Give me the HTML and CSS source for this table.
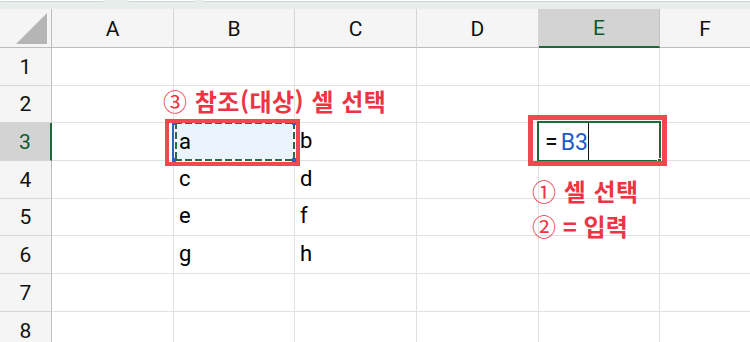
FILE: index.html
```html
<!DOCTYPE html>
<html lang="ko">
<head>
<meta charset="utf-8">
<title>시트</title>
<link rel="stylesheet" href="styles.css">
</head>
<body>
<div class="window">
  <div class="ribbon-edge">
    <span class="tab tab-1"></span>
    <span class="tab tab-2"></span>
    <span class="tab tab-3"></span>
  </div>

  <div class="sheet">
    <div class="corner"><span class="corner-tri"></span></div>
    <div class="col-head">A</div>
    <div class="col-head">B</div>
    <div class="col-head">C</div>
    <div class="col-head">D</div>
    <div class="col-head is-active">E</div>
    <div class="col-head col-last">F</div>

    <div class="row-head">1</div>
    <div class="cell"></div><div class="cell"></div><div class="cell"></div><div class="cell"></div><div class="cell"></div><div class="cell"></div>

    <div class="row-head">2</div>
    <div class="cell"></div><div class="cell"></div><div class="cell"></div><div class="cell"></div><div class="cell"></div><div class="cell"></div>

    <div class="row-head is-active">3</div>
    <div class="cell"></div><div class="cell">a</div><div class="cell">b</div><div class="cell"></div><div class="cell"></div><div class="cell"></div>

    <div class="row-head">4</div>
    <div class="cell"></div><div class="cell">c</div><div class="cell">d</div><div class="cell"></div><div class="cell"></div><div class="cell"></div>

    <div class="row-head">5</div>
    <div class="cell"></div><div class="cell">e</div><div class="cell">f</div><div class="cell"></div><div class="cell"></div><div class="cell"></div>

    <div class="row-head">6</div>
    <div class="cell"></div><div class="cell">g</div><div class="cell">h</div><div class="cell"></div><div class="cell"></div><div class="cell"></div>

    <div class="row-head">7</div>
    <div class="cell"></div><div class="cell"></div><div class="cell"></div><div class="cell"></div><div class="cell"></div><div class="cell"></div>

    <div class="row-head">8</div>
    <div class="cell"></div><div class="cell"></div><div class="cell"></div><div class="cell"></div><div class="cell"></div><div class="cell"></div>
  </div>

  <!-- copy range around B3 -->
  <div class="copy-range"><span class="ants"></span><span class="cell-text">a</span>
    <i class="knob k-tl"></i><i class="knob k-tr"></i><i class="knob k-bl"></i><i class="knob k-br"></i>
  </div>

  <!-- E3 in edit mode -->
  <div class="edit-cell">
    <span class="formula"><span class="eq">=</span><span class="ref">B3</span></span>
    <span class="caret"></span>
    <span class="fill-handle"></span>
  </div>

  <div class="mark mark-ref"></div>
  <div class="mark mark-edit"></div>

  <p class="note note-ref"><span class="num">③</span> 참조(대상) 셀 선택</p>
  <p class="note note-sel"><span class="num">①</span> 셀 선택</p>
  <p class="note note-input"><span class="num">②</span> = 입력</p>
</div>
</body>
</html>
```

FILE: styles.css
```css
* { box-sizing: border-box; }

html, body {
  margin: 0;
  padding: 0;
  background: #ffffff;
}

.window {
  position: relative;
  width: 750px;
  height: 342px;
  overflow: hidden;
  font-family: Roboto, "Noto Sans", sans-serif;
  color: #000;
}

/* strip of the ribbon just above the grid */
.ribbon-edge {
  position: relative;
  height: 9px;
  background: #e7edeb;
}
.tab {
  position: absolute;
  top: 0;
  height: 2px;
  background: #ffffff;
  border-bottom: 1px solid #cdd3d1;
  border-radius: 0 0 3px 3px;
}
.tab-1 { left: 0; width: 104px; }
.tab-2 { left: 127px; width: 68px; }
.tab-3 { left: 203px; right: 0; border-radius: 0 0 0 3px; }

/* worksheet grid */
.sheet {
  display: grid;
  grid-template-columns: 52px 122px 121px 122px 122px 121px 1fr;
  grid-template-rows: 39px 38px 37px 38px 38px 37px 38px 38px 38px;
}

.corner,
.col-head,
.row-head {
  background: #f5f5f5;
  border-right: 1px solid #d6d6d6;
  border-bottom: 1px solid #d6d6d6;
  font-size: 21px;
  color: #111;
}

.corner {
  position: relative;
  border-right-color: #bdbdbd;
  border-bottom-color: #bdbdbd;
}
.corner-tri {
  position: absolute;
  right: 4px;
  bottom: 3px;
  width: 0;
  height: 0;
  border-style: solid;
  border-width: 0 0 31px 31px;
  border-color: transparent transparent #b5b5b5 transparent;
}

.col-head {
  display: flex;
  align-items: center;
  justify-content: center;
  padding-top: 1px;
  border-bottom-color: #bdbdbd;
}
.col-head.col-last { border-right: 0; }

.row-head {
  display: flex;
  align-items: center;
  justify-content: center;
  border-right-color: #bdbdbd;
}

.col-head.is-active {
  background: #d3d3d3;
  color: #0f5a2c;
  border-bottom: 2px solid #1b6b3a;
  border-right-color: #c2c2c2;
}
.row-head.is-active {
  background: #d3d3d3;
  color: #0f5a2c;
  border-right: 2px solid #1b6b3a;
}

.cell {
  border-right: 1px solid #e1e1e1;
  border-bottom: 1px solid #e1e1e1;
  font-size: 22px;
  line-height: 1;
  display: flex;
  align-items: flex-end;
  padding: 0 0 8px 5px;
}
.cell:nth-child(7n) { border-right: 0; }

/* dashed copy range with light fill */
.copy-range {
  position: absolute;
  left: 172px;
  top: 121px;
  width: 124px;
  height: 41px;
  background: #ebf3fc;
  border-left: 2px solid #2d62c0;
}
.copy-range .ants {
  position: absolute;
  left: 1px;
  top: 1px;
  right: 1px;
  bottom: 1px;
  background:
    repeating-linear-gradient(90deg, #2a6a43 0 7px, #ffffff 7px 10px) top / 100% 2px no-repeat,
    repeating-linear-gradient(90deg, #2a6a43 0 7px, #ffffff 7px 10px) bottom / 100% 2px no-repeat,
    repeating-linear-gradient(180deg, #2a6a43 0 7px, #ffffff 7px 10px) left / 2px 100% no-repeat,
    repeating-linear-gradient(180deg, #2a6a43 0 7px, #ffffff 7px 10px) right / 2px 100% no-repeat;
}
.copy-range .cell-text {
  position: absolute;
  left: 5px;
  bottom: 9px;
  font-size: 22px;
  line-height: 1;
}
.knob {
  position: absolute;
  width: 4px;
  height: 4px;
  background: #2d62c0;
}
.k-tl { left: -2px; top: 0; }
.k-bl { left: -2px; bottom: 0; }
.k-tr { right: 0; top: 0; }
.k-br { right: 0; bottom: 0; }

/* E3 being edited */
.edit-cell {
  position: absolute;
  left: 537px;
  top: 121px;
  width: 124px;
  height: 41px;
  background: #ffffff;
  border: 2px solid #1b6b3a;
}
.formula {
  position: absolute;
  left: 6px;
  bottom: 6px;
  font-size: 23px;
  line-height: 1;
}
.formula .eq { color: #111; margin-right: 3px; }
.formula .ref { color: #1d5cc8; }
.caret {
  position: absolute;
  left: 49px;
  top: 0;
  bottom: 0;
  width: 1px;
  background: #111;
}
.fill-handle {
  position: absolute;
  right: -2px;
  bottom: -2px;
  width: 4px;
  height: 4px;
  background: #1b6b3a;
  border-top: 1px solid #fff;
  border-left: 1px solid #fff;
}

/* red highlight frames */
.mark {
  position: absolute;
  border: 4px solid #f0484f;
}
.mark-ref {
  left: 165px;
  top: 119px;
  width: 135px;
  height: 47px;
}
.mark-edit {
  left: 528px;
  top: 115px;
  width: 139px;
  height: 51px;
  border-width: 5px;
}

/* annotations */
.note {
  position: absolute;
  margin: 0;
  font-family: "Noto Sans CJK KR", "Noto Sans", sans-serif;
  font-weight: 700;
  font-size: 24px;
  line-height: 30px;
  letter-spacing: 0.5px;
  color: #ec3445;
  white-space: nowrap;
}
.note .num { font-weight: 400; }
.note-ref { left: 163px; top: 86px; }
.note-sel { left: 532px; top: 176px; }
.note-input { left: 532px; top: 211px; letter-spacing: 0; }
```
